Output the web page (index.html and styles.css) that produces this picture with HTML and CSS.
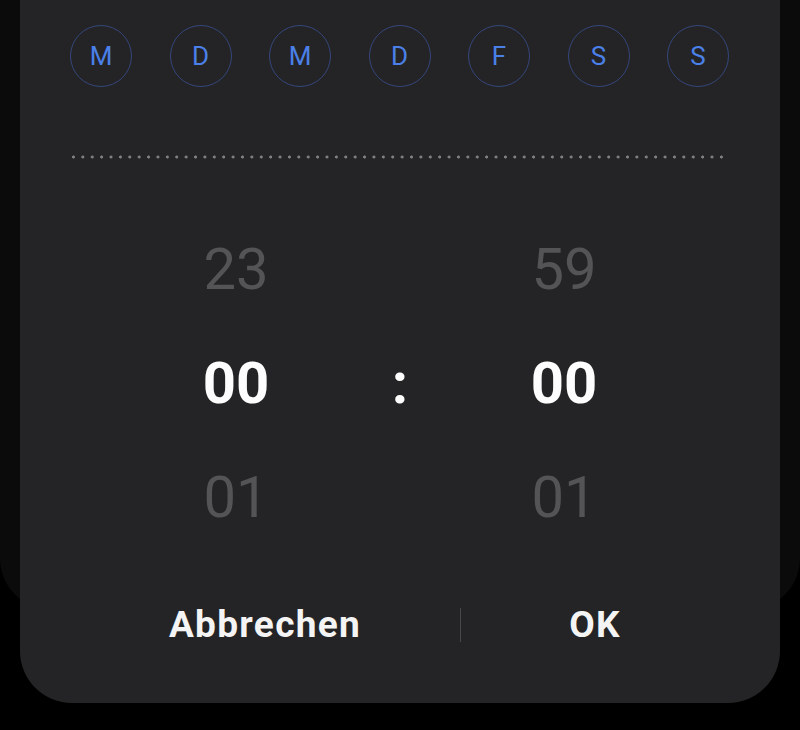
FILE: index.html
```html
<!DOCTYPE html>
<html lang="de">
<head>
<meta charset="utf-8">
<title>Wecker</title>
<link rel="stylesheet" href="styles.css">
</head>
<body>
<div class="backdrop">
  <div class="sheet">
    <div class="days">
      <div class="day">M</div>
      <div class="day">D</div>
      <div class="day">M</div>
      <div class="day">D</div>
      <div class="day">F</div>
      <div class="day">S</div>
      <div class="day">S</div>
    </div>
    <div class="dots"></div>
    <div class="picker">
      <div class="col">
        <div class="num dim">23</div>
        <div class="num sel">00</div>
        <div class="num dim">01</div>
      </div>
      <div class="col colon-col">
        <div class="num"></div>
        <div class="num sel">:</div>
        <div class="num"></div>
      </div>
      <div class="col">
        <div class="num dim">59</div>
        <div class="num sel">00</div>
        <div class="num dim">01</div>
      </div>
    </div>
    <div class="actions">
      <div class="btn btn-cancel">Abbrechen</div>
      <div class="sep"></div>
      <div class="btn btn-ok">OK</div>
    </div>
  </div>
</div>
</body>
</html>
```
FILE: styles.css
```css
* { box-sizing: border-box; }
html, body {
  margin: 0;
  padding: 0;
  background: #000;
}
body {
  width: 800px;
  height: 730px;
  overflow: hidden;
  font-family: Roboto, "Noto Sans", "Liberation Sans", sans-serif;
}
.backdrop {
  width: 800px;
  height: 610px;
  background: #0b0b0b;
  border-radius: 0 0 52px 52px;
  padding-left: 20px;
}
.sheet {
  width: 760px;
  height: 703px;
  background: #242426;
  border-radius: 0 0 52px 52px;
  padding-top: 25px;
}
.days {
  display: flex;
  justify-content: space-between;
  padding: 0 51px 0 50px;
}
.day {
  width: 62px;
  height: 62px;
  border: 1.3px solid #34477c;
  border-radius: 50%;
  color: #4a80e8;
  font-size: 26px;
  line-height: 60px;
  text-align: center;
}
.dots {
  margin: 68px 56px 0 52px;
  height: 4px;
  background-image: radial-gradient(circle at 1.5px 2px, #808080 1.3px, transparent 1.8px);
  background-size: 9.4px 4px;
  background-repeat: repeat-x;
}
.picker {
  display: grid;
  grid-template-columns: 200px 128px 200px;
  justify-content: center;
  margin-top: 53px;
}
.col {
  display: flex;
  flex-direction: column;
}
.num {
  height: 114px;
  line-height: 114px;
  font-size: 58px;
  text-align: center;
}
.dim {
  color: #545456;
  font-weight: 400;
}
.sel {
  color: #fdfdfd;
  font-weight: 700;
}
.actions {
  display: flex;
  align-items: center;
  margin-top: 36px;
  height: 70px;
  padding-left: 50px;
}
.btn {
  color: #f4f4f4;
  font-size: 37px;
  font-weight: 700;
  letter-spacing: 1.3px;
  line-height: 70px;
  text-align: center;
}
.btn-cancel { width: 390px; }
.btn-ok { width: 268px; }
.sep {
  width: 1px;
  height: 34px;
  background: #47474a;
}
```
